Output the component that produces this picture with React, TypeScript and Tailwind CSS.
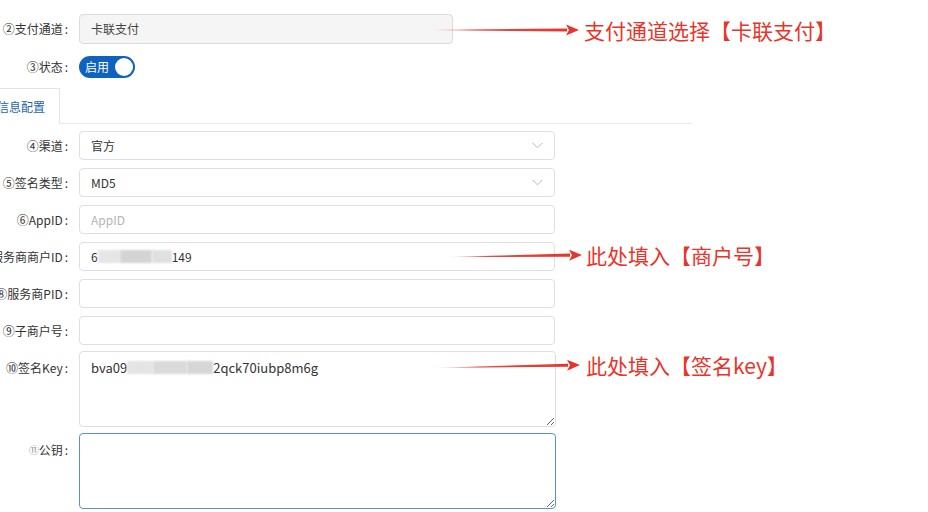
import React from "react";

const font = { fontFamily: '"Microsoft YaHei", "Noto Sans CJK SC", "Noto Sans", sans-serif' };

function Label({ text, top = false, children }: { text?: string; top?: boolean; children?: React.ReactNode }) {
  return (
    <div className={`w-[72px] shrink-0 flex justify-end whitespace-nowrap text-[12px] text-[#333] ${top ? "pt-[8px]" : "items-center"}`}>
      {children}
      {text}
      <span className="ml-[2px] mr-[4px]">:</span>
    </div>
  );
}

function Chevron() {
  return (
    <svg width="11" height="7" viewBox="0 0 11 7" className="text-[#b8b8b8]">
      <path d="M0.5 0.8 L5.5 5.8 L10.5 0.8" fill="none" stroke="currentColor" strokeWidth="1" />
    </svg>
  );
}

function Blur({ w, tone = "#dcdcdc" }: { w: number; tone?: string }) {
  return <span className="inline-block h-[13px] align-middle blur-[1px]" style={{ width: w, background: tone }} />;
}

function Arrow({ x1, y1, x2, y2, id }: { x1: number; y1: number; x2: number; y2: number; id: string }) {
  const left = Math.min(x1, x2) - 2;
  const top = Math.min(y1, y2) - 8;
  const w = Math.abs(x2 - x1) + 4;
  const h = Math.abs(y2 - y1) + 16;
  const ax = x1 - left, ay = y1 - top, bx = x2 - left, by = y2 - top;
  const hx = bx - 12;
  const hy = ay + (by - ay) * ((hx - ax) / (bx - ax));
  return (
    <svg className="absolute pointer-events-none" style={{ left, top, width: w, height: h }} viewBox={`0 0 ${w} ${h}`}>
      <defs>
        <linearGradient id={id} x1="0" x2="1" y1="0" y2="0">
          <stop offset="0" stopColor="#e8352b" stopOpacity="0" />
          <stop offset="0.35" stopColor="#e8352b" stopOpacity="0.9" />
          <stop offset="1" stopColor="#e8352b" />
        </linearGradient>
      </defs>
      <polygon points={`${ax},${ay} ${hx},${hy - 1.6} ${hx},${hy + 1.6}`} fill={`url(#${id})`} />
      <polygon points={`${hx - 1},${hy - 5.5} ${bx},${by} ${hx - 1},${hy + 5.5} ${hx + 2},${hy}`} fill="#e8352b" />
    </svg>
  );
}

const inputBox = "h-[29px] w-[476px] rounded-[4px] border border-[#dcdfe6] bg-white px-[11px] flex items-center text-[12px] text-[#333]";
const note = "absolute text-[21px] leading-[28px] text-[#e8352b] whitespace-nowrap";

export default function App() {
  return (
    <div className="relative w-[928px] h-[512px] overflow-hidden bg-white" style={font}>
      <div className="pt-[14px]">
        <div className="flex gap-[7px]">
          <Label text="②支付通道" />
          <div className="h-[30px] w-[374px] rounded-[4px] border border-[#dcdcdc] bg-[#f5f5f5] px-[11px] flex items-center text-[12px] text-[#444]">卡联支付</div>
        </div>

        <div className="flex gap-[7px] mt-[12px]">
          <Label text="③状态" />
          <div className="h-[22px] w-[56px] rounded-full bg-[#0f62bd] flex items-center justify-between pl-[6px] pr-[2px]">
            <span className="text-[12px] text-white leading-none">启用</span>
            <span className="w-[18px] h-[18px] rounded-full bg-white" />
          </div>
        </div>

        <div className="flex mt-[10px] w-[692px]">
          <div className="h-[36px] pr-[14px] -ml-[3px] border-t border-r border-[#e4e4e4] flex items-center text-[12px] text-[#1e64b4]">信息配置</div>
          <div className="flex-1 border-b border-[#e8e8e8]" />
        </div>

        <div className="flex flex-col gap-[8px] mt-[7px]">
          <div className="flex gap-[7px]">
            <Label text="④渠道" />
            <div className={`${inputBox} justify-between`}>
              <span>官方</span>
              <Chevron />
            </div>
          </div>
          <div className="flex gap-[7px]">
            <Label text="⑤签名类型" />
            <div className={`${inputBox} justify-between`}>
              <span>MD5</span>
              <Chevron />
            </div>
          </div>
          <div className="flex gap-[7px]">
            <Label text="⑥AppID" />
            <div className={inputBox}>
              <span className="text-[#b5b5b5]">AppID</span>
            </div>
          </div>
          <div className="flex gap-[7px]">
            <Label text="⑦服务商商户ID" />
            <div className={inputBox}>
              <span>6</span>
              <Blur w={22} tone="#e6e6e6" />
              <Blur w={32} tone="#d4d4d4" />
              <Blur w={20} tone="#e0e0e0" />
              <span>149</span>
            </div>
          </div>
          <div className="flex gap-[7px]">
            <Label text="⑧服务商PID" />
            <div className={inputBox} />
          </div>
          <div className="flex gap-[7px]">
            <Label text="⑨子商户号" />
            <div className={inputBox} />
          </div>
          <div className="flex gap-[7px] mt-[-2px]">
            <Label text="⑩签名Key" top />
            <div className="relative">
              <textarea
                readOnly
                className="block h-[76px] w-[477px] rounded-[4px] border border-[#dcdfe6] bg-white pl-[11px] pt-[8px] text-[13px] text-transparent resize-y outline-none"
                value=""
              />
              <div className="absolute left-[12px] top-[7px] text-[13px] text-[#333] flex items-center pointer-events-none">
                <span>bva09</span>
                <Blur w={26} tone="#e4e4e4" />
                <Blur w={34} tone="#dadada" />
                <Blur w={26} tone="#d6d6d6" />
                <span>2qck70iubp8m6g</span>
              </div>
            </div>
          </div>
          <div className="flex gap-[7px] mt-[-2px]">
            <Label text="公钥" top>
              <span className="text-[10px] text-[#888] mt-[1px]">⑪</span>
            </Label>
            <textarea
              readOnly
              className="block h-[76px] w-[477px] rounded-[4px] border border-[#5b93c4] bg-white px-[11px] py-[8px] text-[13px] resize-y outline-none"
              value=""
            />
          </div>
        </div>
      </div>

      <Arrow id="a1" x1={424} y1={30} x2={579} y2={30} />
      <div className={`${note} left-[584px] top-[16px]`}>支付通道选择【卡联支付】</div>

      <Arrow id="a2" x1={444} y1={257} x2={582} y2={255} />
      <div className={`${note} left-[586px] top-[241px]`}>此处填入【商户号】</div>

      <Arrow id="a3" x1={431} y1={368} x2={580} y2={365} />
      <div className={`${note} left-[586px] top-[351px]`}>此处填入【签名key】</div>
    </div>
  );
}
